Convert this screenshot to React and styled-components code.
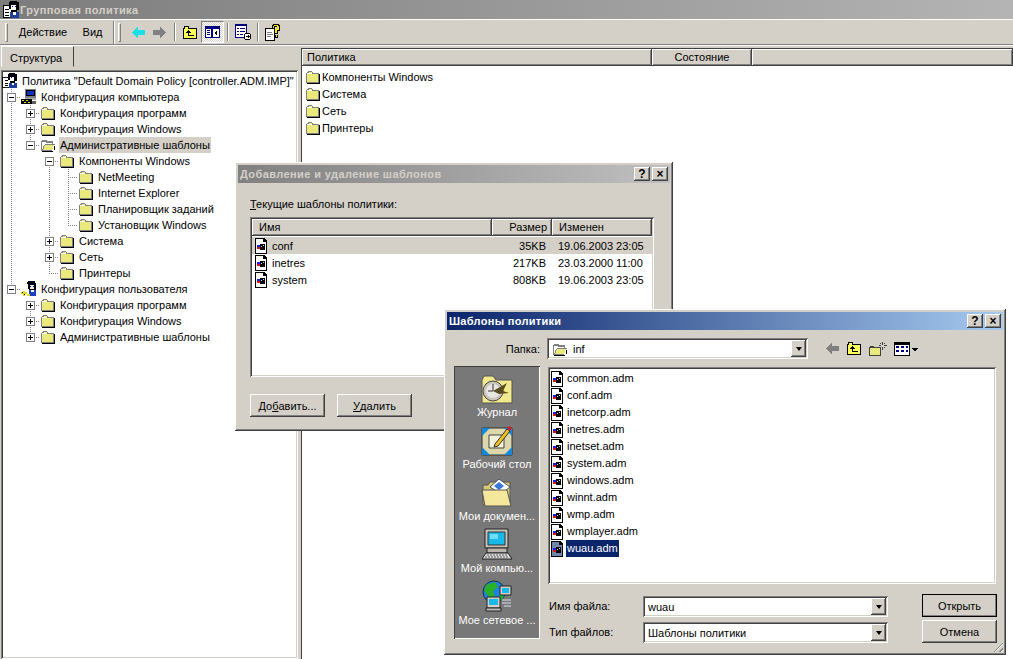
import styled, { createGlobalStyle, css } from 'styled-components';

const raised = css`
  box-shadow: inset -1px -1px #404040, inset 1px 1px #fff, inset -2px -2px #808080, inset 2px 2px #d4d0c8;
`;
const sunken = css`
  box-shadow: inset 1px 1px #808080, inset -1px -1px #fff, inset 2px 2px #404040, inset -2px -2px #d4d0c8;
`;

const GlobalStyle = createGlobalStyle`
  html, body { margin: 0; padding: 0; background: #d4d0c8; }
  body { font: 11px/16px "Liberation Sans", Arial, sans-serif; color: #000; }
  * { box-sizing: border-box; }
`;

/* ---------- icons ---------- */

function Folder() {
  return (
    <svg width="16" height="16" viewBox="0 0 16 16" shapeRendering="crispEdges">
      <path d="M1 4h1V3h1V2h4v1h1v1h6v10H1z" fill="#808080" />
      <path d="M2 5h1V4h1V3h3v2h6v8H2z" fill="#e9e97c" />
      <path d="M2 4h5v1H2z" fill="#fff" />
      <path d="M14 5h1v10H2v-1h12z" fill="#000" />
    </svg>
  );
}

function OpenFolder() {
  return (
    <svg width="16" height="16" viewBox="0 0 16 16" shapeRendering="crispEdges">
      <path d="M1 4h1V3h5v1h6v3h2v1h-1l-2 6H1z" fill="#808080" />
      <path d="M2 5h4v1h6v1H5v1H4v1H3v3H2z" fill="#fff" />
      <path d="M5 8h9l-2 5H3z" fill="#e9e97c" />
      <path d="M13 14H2v1h11zM14 9h1v4h-1z" fill="#000" />
    </svg>
  );
}

function AdmFile({ selected }) {
  return (
    <svg width="13" height="16" viewBox="0 0 13 16" shapeRendering="crispEdges">
      <path d="M0 0h9l3 3v13H0z" fill="#000" />
      <path d="M1 1h7v3h3v11H1z" fill={selected ? '#6f86ad' : '#fff'} />
      <path d="M2 7h3v2H2z" fill="#1a1aff" />
      <path d="M2 9h3v2H2z" fill="#e01010" />
      <path d="M5 6h5v6H5z" fill="#000" />
      <path d="M6 8h1v1H6zM8 7h1v1H8z" fill="#d8d8d0" />
    </svg>
  );
}

function PolicyIcon() {
  return (
    <svg width="18" height="18" viewBox="0 0 18 18" shapeRendering="crispEdges">
      <path d="M1 4.500h9v12H1z" fill="#fff" stroke="#000" />
      <path d="M3 8h4v1H3zM3 11h4v1H3zM3 14h4v1H3z" fill="#000" />
      <path d="M7 1h1V0h7v1h2v8h-2v2H9V8H7z" fill="#000" />
      <path d="M9 4h5v5H9z" fill="#fff" />
      <path d="M10 5h1v1h-1zM13 5h1v1h-1z" fill="#00f" />
      <path d="M8 11h9v6H8z" fill="#1f3f9f" />
      <path d="M11 11h3v3h-3z" fill="#fff" />
    </svg>
  );
}

function ComputerIcon() {
  return (
    <svg width="16" height="16" viewBox="0 0 16 16" shapeRendering="crispEdges">
      <path d="M4 0h11v11H4z" fill="#808080" />
      <path d="M5 1h9v6H5z" fill="#000" />
      <path d="M6 2h7v4H6z" fill="#1030c0" />
      <path d="M4 9h11v2H4z" fill="#b0b0a8" />
      <path d="M0 10h11v5H0z" fill="#000" />
      <path d="M1 11h2v1H1zM5 11h2v1H5zM3 13h2v1H3zM7 13h2v1H7z" fill="#e8d820" />
      <path d="M11 12h4v3h-4z" fill="#606060" />
    </svg>
  );
}

function UserIcon() {
  return (
    <svg width="16" height="16" viewBox="0 0 16 16" shapeRendering="crispEdges">
      <path d="M7 0h7v2h1v8h-2v1H8V8H7V3H6V1h1z" fill="#000" />
      <path d="M9 4h4v4H9z" fill="#f5e6d2" />
      <path d="M9 5h1v1H9zM12 5h1v1h-1z" fill="#00f" />
      <path d="M8 9h7v6H8z" fill="#1a3fc0" />
      <path d="M10 9h3v2h-3z" fill="#fff" />
      <path d="M0 11h2v-1h2v1h2v2H4v2H2v-2H0zM6 13h3v2H6z" fill="#e8d820" />
      <path d="M1 11h1v1H1zM3 13h1v1H3z" fill="#000" />
    </svg>
  );
}

function ArrowLeft({ color }) {
  return (
    <svg width="14" height="11" viewBox="0 0 14 11" shapeRendering="crispEdges">
      <path d="M6 0h1v3h7v5H7v3H6V10H5V9H4V8H3V7H2V6H1V5h1V4h1V3h1V2h1V1h1z" fill={color} />
    </svg>
  );
}

function ArrowRight() {
  return (
    <svg width="14" height="11" viewBox="0 0 14 11" shapeRendering="crispEdges">
      <path d="M8 0H7v3H0v5h7v3h1V10h1V9h1V8h1V7h1V6h1V5h-1V4h-1V3h-1V2H9V1H8z" fill="#808080" />
    </svg>
  );
}

function FolderUp() {
  return (
    <svg width="16" height="15" viewBox="0 0 16 15" shapeRendering="crispEdges">
      <path d="M1 3h1V1h5v2h8v11H1z" fill="#000" />
      <path d="M2 4h1V2h3v2h8v9H2z" fill="#ffff5a" />
      <path d="M6 5h1v1h1v1H7v3h5v1H6V7H5V6h1z" fill="#000" />
      <path d="M4 7h5v1H4z" fill="#000" />
    </svg>
  );
}

function PaneToggle() {
  return (
    <svg width="15" height="12" viewBox="0 0 15 12" shapeRendering="crispEdges">
      <path d="M0 0h15v12H0z" fill="#000080" />
      <path d="M1 3h5v8H1zM8 3h6v8H8z" fill="#fff" />
      <path d="M2 4h3v1H2zM2 6h3v1H2zM2 8h3v1H2z" fill="#000080" />
      <path d="M12 4v6L9 7z" fill="#000" />
    </svg>
  );
}

function ExportList() {
  return (
    <svg width="17" height="17" viewBox="0 0 17 17" shapeRendering="crispEdges">
      <path d="M0 0h12v14H0z" fill="#000080" />
      <path d="M1 2h10v11H1z" fill="#fff" />
      <path d="M2 4h2v1H2zM5 4h5v1H5zM2 7h2v1H2zM5 7h5v1H5zM2 10h2v1H2zM5 10h3v1H5z" fill="#000080" />
      <path d="M9 10h1V9h5v1h1v5h-1v1h-5v-1H9z" fill="#000" />
      <path d="M10 10h5v5h-5z" fill="#fff" />
      <path d="M11 12h2v-1l2 1.500-2 1.500v-1h-2z" fill="#000" />
    </svg>
  );
}

function HelpIcon() {
  return (
    <svg width="16" height="17" viewBox="0 0 16 17" shapeRendering="crispEdges">
      <path d="M0 4h10v13H0z" fill="#000" />
      <path d="M1 5h8v11H1z" fill="#fff" />
      <path d="M2 8h5v1H2zM2 10h6v1H2zM2 12h4v1H2z" fill="#808080" />
      <path d="M7 1h1V0h6v1h1v6h-2v3H9V6h3V3h-2v2H7z" fill="#000" />
      <path d="M8 2h1V1h4v1h1v4h-2v3h-2V5h2V2h-3v2H8z" fill="#ffe600" />
      <path d="M10 11h3v3h-3z" fill="#000" />
      <path d="M11 11h1v2h-1z" fill="#ffe600" />
    </svg>
  );
}

function NewFolder() {
  return (
    <svg width="18" height="14" viewBox="0 0 18 14" shapeRendering="crispEdges">
      <path d="M0 5h1V4h4v1h7v9H0z" fill="#404040" />
      <path d="M1 6h10v7H1z" fill="#e9e97c" />
      <path d="M13 0h1v3h-1zM13 5h1v3h-1zM15 3h3v1h-3zM10 3h2v1h-2zM15 1h1v1h-1zM11 1h1v1h-1zM15 5h1v1h-1z" fill="#404040" />
    </svg>
  );
}

function ViewMenu() {
  return (
    <svg width="24" height="14" viewBox="0 0 24 14" shapeRendering="crispEdges">
      <path d="M0 0h16v14H0z" fill="#000" />
      <path d="M1 3h14v10H1z" fill="#fff" />
      <path d="M2 4h3v2H2zM7 4h3v2H7zM12 4h2v2h-2zM2 8h3v2H2zM7 8h3v2H7zM12 8h2v2h-2z" fill="#000080" />
      <path d="M18 6h6v1h-1v1h-1v1h-2V8h-1V7h-1z" fill="#000" />
    </svg>
  );
}

function HistoryIcon() {
  return (
    <svg width="32" height="29" viewBox="0 0 32 29">
      <path d="M1 5l2-4h9l3 4h16v23H1z" fill="#f2e88c" stroke="#555" />
      <circle cx="12" cy="16" r="10" fill="#c8c4bc" stroke="#444" />
      <circle cx="12" cy="16" r="7" fill="#e8e6e0" />
      <path d="M12 16L26 8l-4 8 6 2-10 1z" fill="#5a4a20" />
      <path d="M12 9v7h-5" stroke="#333" fill="none" />
    </svg>
  );
}

function DesktopIcon() {
  return (
    <svg width="32" height="32" viewBox="0 0 32 32">
      <path d="M1 4h30v27H1z" fill="#dcd8ac" stroke="#333" />
      <path d="M1 4h8L1 12zM31 31h-8l8-8zM1 31v-8l8 8zM31 4v8l-8-8z" fill="#1488d8" />
      <path d="M8 11h15v13H8z" fill="#f5f2dc" stroke="#444" />
      <path d="M14 20L26 5l3 2-12 15-4 1z" fill="#f0c020" stroke="#333" />
      <path d="M26 5l2-3 3 2-2 3z" fill="#d02020" />
    </svg>
  );
}

function DocumentsIcon() {
  return (
    <svg width="32" height="30" viewBox="0 0 32 30">
      <path d="M2 7h5l2-3h20v23H2z" fill="#d8c878" stroke="#555" />
      <path d="M9 9L18 1l11 8-9 7z" fill="#fff" stroke="#456" />
      <path d="M18 4l5 4-5 4-5-4z" fill="#3a78d8" />
      <path d="M1 12h25l4 16H4z" fill="#f4e89c" stroke="#555" />
    </svg>
  );
}

function ComputerLarge() {
  return (
    <svg width="32" height="32" viewBox="0 0 32 32">
      <path d="M4 1h23v19H4z" fill="#c8c4bc" stroke="#222" />
      <path d="M7 4h17v13H7z" fill="#18b8e8" stroke="#333" />
      <path d="M9 6h8v5H9z" fill="#70dcf8" />
      <path d="M6 20h20v5H6z" fill="#b8b4ac" stroke="#222" />
      <path d="M1 31l4-6h22l4 6z" fill="#ddd" stroke="#222" />
      <path d="M6 27h20M4 29h24" stroke="#555" strokeDasharray="2 1" />
    </svg>
  );
}

function NetworkIcon() {
  return (
    <svg width="32" height="32" viewBox="0 0 32 32">
      <circle cx="13" cy="12" r="11" fill="#2080e0" stroke="#134" />
      <path d="M5 5l9-3 3 5-5 4 2 6-5 3-3-6-3-3zM19 14l4 2-3 5-2-3z" fill="#28b028" />
      <path d="M19 6h11v9H19z" fill="#d4d0c8" stroke="#222" />
      <path d="M21 8h7v5h-7z" fill="#18b8e8" />
      <path d="M6 17h13v11H6z" fill="#d4d0c8" stroke="#222" />
      <path d="M8 19h9v6H8z" fill="#18b8e8" />
      <path d="M5 28h15v3H5z" fill="#bbb" stroke="#222" />
      <path d="M21 20h9M21 23h9M23 26h7" stroke="#dde" />
    </svg>
  );
}

/* ---------- main window ---------- */

const Desktop = styled.div`
  position: relative;
  width: 1013px;
  height: 659px;
  overflow: hidden;
  background: #d4d0c8;
`;

const TitleBar = styled.div`
  height: 19px;
  display: flex;
  align-items: center;
  gap: 0;
  padding-left: 2px;
  background: linear-gradient(to right, #7c7c7c, #b4b4b4);
  color: #d4d0c8;
  font-weight: bold;
  letter-spacing: 0.4px;
`;

const Toolbar = styled.div`
  height: 26px;
  display: flex;
  align-items: center;
  padding: 0 0 0 5px;
  border-top: 1px solid #fff;
  border-bottom: 1px solid #808080;
  box-shadow: 0 1px #fff;
`;

const Grip = styled.span`
  width: 3px;
  height: 19px;
  margin-right: ${(p) => p.$after || 0}px;
  border: 1px solid;
  border-color: #fff #808080 #808080 #fff;
`;

const MenuItem = styled.span`
  width: ${(p) => p.$width}px;
  text-align: center;
`;

const BandEdge = styled.span`
  width: 2px;
  height: 23px;
  margin: 0 3px 0 3px;
  border-left: 1px solid #808080;
  border-right: 1px solid #fff;
`;

const ToolSep = styled.span`
  width: 2px;
  height: 18px;
  margin: 0 ${(p) => p.$gap || 3}px;
  border-left: 1px solid #808080;
  border-right: 1px solid #fff;
`;

const ToolButton = styled.span`
  width: ${(p) => p.$width || 22}px;
  height: 22px;
  display: flex;
  align-items: center;
  justify-content: center;
  ${(p) =>
    p.$pressed &&
    css`
      background: repeating-conic-gradient(#fff 0 25%, #d4d0c8 0 50%) 0 0 / 2px 2px;
      border: 1px solid;
      border-color: #808080 #fff #fff #808080;
    `}
`;

const Panes = styled.div`
  height: 614px;
  display: flex;
`;

const LeftPane = styled.div`
  width: 298px;
  padding: 1px 0 0 1px;
  display: flex;
  flex-direction: column;
`;

const Tab = styled.div`
  width: 73px;
  height: 21px;
  padding: 3px 0 0 8px;
  border: 1px solid;
  border-color: #fff #404040 transparent #fff;
`;

const Tree = styled.div`
  flex: 1;
  margin-top: 3px;
  padding: 3px 0 0 1px;
  background: #fff;
  ${sunken}
`;

const TreeRowWrap = styled.div`
  height: 16px;
  display: flex;
  align-items: center;
`;

const dots = 'repeating-linear-gradient(to bottom,#808080 0 1px,transparent 1px 2px)';
const dotsH = 'repeating-linear-gradient(to right,#808080 0 1px,transparent 1px 2px)';

const guideBackground = ({ $up, $down, $right }) => {
  const layers = [];
  if ($up && $down) layers.push(`${dots} 9px 0 / 1px 16px no-repeat`);
  else if ($up) layers.push(`${dots} 9px 0 / 1px 8px no-repeat`);
  else if ($down) layers.push(`${dots} 9px 8px / 1px 8px no-repeat`);
  if ($right) layers.push(`${dotsH} 9px 8px / 10px 1px no-repeat`);
  return layers.length ? layers.join(',') : 'none';
};

const Guide = styled.span`
  flex: 0 0 19px;
  height: 16px;
  display: flex;
  align-items: center;
  justify-content: center;
  padding-right: 1px;
  background: ${guideBackground};
`;

const Expander = styled.span`
  width: 9px;
  height: 9px;
  display: block;
  border: 1px solid #808080;
  background:
    ${(p) => (p.$open ? 'none' : 'linear-gradient(#000,#000) 3px 1px / 1px 5px no-repeat')},
    linear-gradient(#000, #000) 1px 3px / 5px 1px no-repeat,
    #fff;
`;

const NodeIcon = styled.span`
  flex: 0 0 16px;
  min-width: 0;
  height: 16px;
  display: flex;
  align-items: center;
`;

const NodeLabel = styled.span`
  margin-left: 3px;
  padding: 0 1px;
  white-space: nowrap;
  background: ${(p) => (p.$selected ? '#d4d0c8' : 'transparent')};
`;

const Splitter = styled.div`
  width: 3px;
`;

const RightPane = styled.div`
  flex: 1;
  margin-top: 3px;
  background: #fff;
  padding: 1px 0 0 1px;
  box-shadow: inset 1px 1px #404040;
`;

const ColumnHeaders = styled.div`
  display: flex;
  height: 17px;
  background: #d4d0c8;
`;

const ListHeaders = styled(ColumnHeaders)`
  margin-bottom: 1px;
`;

const ColumnHeader = styled.div`
  flex: ${(p) => (p.$width ? `0 0 ${p.$width}px` : '1')};
  padding: 1px ${(p) => p.$pad || 5}px;
  line-height: 14px;
  white-space: nowrap;
  text-align: ${(p) => p.$align || 'left'};
  box-shadow: inset -1px -1px #404040, inset 1px 1px #fff, inset -2px -2px #808080;
`;

const FolderList = styled.div`
  padding: 2px 0 0 3px;
`;

const FolderRow = styled.div`
  height: 17px;
  display: flex;
  align-items: center;
  gap: 1px;
`;

/* ---------- dialogs ---------- */

const Dialog = styled.div`
  position: absolute;
  left: ${(p) => p.$left}px;
  top: ${(p) => p.$top}px;
  width: ${(p) => p.$width}px;
  height: ${(p) => p.$height}px;
  padding: 3px;
  display: flex;
  flex-direction: column;
  background: #d4d0c8;
  ${raised}
`;

const DialogTitle = styled.div`
  flex: 0 0 18px;
  display: flex;
  align-items: center;
  justify-content: space-between;
  padding: 0 2px;
  font-weight: bold;
  color: ${(p) => (p.$active ? '#fff' : '#d4d0c8')};
  background: ${(p) =>
    p.$active
      ? 'linear-gradient(to right,#0a246a,#a6caf0)'
      : 'linear-gradient(to right,#808080,#c0c0c0)'};
`;

const TitleText = styled.span`
  letter-spacing: ${(p) => (p.$active ? 0.3 : 0.4)}px;
`;

const CaptionButtons = styled.div`
  display: flex;
  gap: 2px;
`;

const CaptionButton = styled.span`
  width: 16px;
  height: 14px;
  display: flex;
  align-items: center;
  justify-content: center;
  background: #d4d0c8;
  color: #000;
  font-size: 12px;
  font-weight: bold;
  line-height: 14px;
  ${raised}
`;

const TemplatesBody = styled.div`
  flex: 1;
  padding: 13px 16px 0 12px;
  display: flex;
  flex-direction: column;
`;

const FieldLabel = styled.div`
  height: 21px;
`;

const ListView = styled.div`
  height: 160px;
  padding: 2px;
  background: #fff;
  ${sunken}
`;

const ListRow = styled.div`
  height: 17px;
  display: flex;
  align-items: center;
  background: ${(p) => (p.$selected ? '#d4d0c8' : 'transparent')};
`;

const NameCell = styled.span`
  flex: 0 0 240px;
  display: flex;
  align-items: center;
  gap: 4px;
  padding-left: 3px;
`;

const SizeCell = styled.span`
  flex: 0 0 59px;
  text-align: right;
  padding-right: 5px;
`;

const DateCell = styled.span`
  padding-left: 7px;
  white-space: nowrap;
`;

const ButtonRow = styled.div`
  display: flex;
  gap: 12px;
  margin-top: 17px;
`;

const Button = styled.div`
  width: 75px;
  height: 23px;
  display: flex;
  align-items: center;
  justify-content: center;
  background: #d4d0c8;
  ${raised}
  ${(p) => p.$default && 'outline: 1px solid #000; outline-offset: -1px;'}
`;

const OpenBody = styled.div`
  flex: 1;
  padding: 8px 9px 0 7px;
  display: grid;
  grid-template-columns: 86px 448px;
  grid-template-rows: 21px 217px auto;
  column-gap: 8px;
  row-gap: 8px;
`;

const LookInLabel = styled.div`
  text-align: right;
  line-height: 22px;
`;

const LookInRow = styled.div`
  display: flex;
  align-items: center;
  margin-left: -1px;
`;

const Combo = styled.div`
  grid-column: ${(p) => p.$column || 'auto'};
  width: ${(p) => p.$width}px;
  height: 21px;
  display: flex;
  align-items: center;
  gap: 5px;
  padding: 0 2px 0 5px;
  background: #fff;
  white-space: nowrap;
  ${sunken}
`;

const ComboText = styled.span`
  flex: 1;
`;

const ComboArrow = styled.span`
  flex: 0 0 15px;
  height: 17px;
  display: flex;
  align-items: center;
  justify-content: center;
  background: #d4d0c8;
  ${raised}
  &::after {
    content: '';
    border: 3px solid transparent;
    border-top: 4px solid #000;
    border-bottom: 0;
  }
`;

const NavIcons = styled.div`
  display: flex;
  align-items: center;
  margin-left: 17px;
  gap: 7px;
`;

const Places = styled.div`
  grid-row: 2 / span 2;
  height: 273px;
  margin-top: -1px;
  padding-top: 7px;
  background: #787878;
  color: #fff;
  box-shadow: inset 1px 1px #404040, inset -1px -1px #fff;
`;

const Place = styled.div`
  height: 52px;
  display: flex;
  flex-direction: column;
  align-items: center;
  text-align: center;
`;

const PlaceIcon = styled.div`
  height: 31px;
  display: flex;
  align-items: flex-end;
  justify-content: center;
`;

const FileBox = styled.div`
  padding: 3px 0 0 3px;
  background: #fff;
  ${sunken}
`;

const FileRow = styled.div`
  height: 17px;
  display: flex;
  align-items: center;
  gap: 2px;
`;

const FileName = styled.span`
  padding: 0 1px;
  height: 17px;
  color: ${(p) => (p.$selected ? '#fff' : '#000')};
  background: ${(p) => (p.$selected ? '#0a246a' : 'transparent')};
`;

const OpenForm = styled.div`
  margin: 2px 0 0 1px;
  display: grid;
  grid-template-columns: 94px 245px 34px 75px;
  grid-template-rows: 23px 23px;
  row-gap: 3px;
  align-items: end;
`;

const FormLabel = styled.div`
  grid-column: 1;
  align-self: center;
`;

const ButtonCell = styled.div`
  grid-column: 4;
  grid-row: ${(p) => p.$row};
`;

const Resizer = styled.span`
  position: absolute;
  right: 3px;
  bottom: 3px;
  width: 12px;
  height: 12px;
  background: repeating-linear-gradient(135deg, transparent 0 2px, #808080 2px 3px, #fff 3px 4px);
  clip-path: polygon(100% 0, 100% 100%, 0 100%);
`;

/* ---------- data ---------- */

const tree = [
  { depth: [{ up: 1, down: 1, right: 1, box: 'open' }], icon: <ComputerIcon />, label: 'Конфигурация компьютера' },
  { depth: [{ up: 1, down: 1 }, { down: 1, up: 1, right: 1, box: 'closed' }], icon: <Folder />, label: 'Конфигурация программ' },
  { depth: [{ up: 1, down: 1 }, { down: 1, up: 1, right: 1, box: 'closed' }], icon: <Folder />, label: 'Конфигурация Windows' },
  { depth: [{ up: 1, down: 1 }, { up: 1, right: 1, box: 'open' }], icon: <OpenFolder />, label: 'Административные шаблоны', selected: true },
  { depth: [{ up: 1, down: 1 }, {}, { down: 1, right: 1, box: 'open' }], icon: <Folder />, label: 'Компоненты Windows' },
  { depth: [{ up: 1, down: 1 }, {}, { up: 1, down: 1 }, { up: 1, down: 1, right: 1 }], icon: <Folder />, label: 'NetMeeting' },
  { depth: [{ up: 1, down: 1 }, {}, { up: 1, down: 1 }, { up: 1, down: 1, right: 1 }], icon: <Folder />, label: 'Internet Explorer' },
  { depth: [{ up: 1, down: 1 }, {}, { up: 1, down: 1 }, { up: 1, down: 1, right: 1 }], icon: <Folder />, label: 'Планировщик заданий' },
  { depth: [{ up: 1, down: 1 }, {}, { up: 1, down: 1 }, { up: 1, right: 1 }], icon: <Folder />, label: 'Установщик Windows' },
  { depth: [{ up: 1, down: 1 }, {}, { up: 1, down: 1, right: 1, box: 'closed' }], icon: <Folder />, label: 'Система' },
  { depth: [{ up: 1, down: 1 }, {}, { up: 1, down: 1, right: 1, box: 'closed' }], icon: <Folder />, label: 'Сеть' },
  { depth: [{ up: 1, down: 1 }, {}, { up: 1, right: 1 }], icon: <Folder />, label: 'Принтеры' },
  { depth: [{ up: 1, right: 1, box: 'open' }], icon: <UserIcon />, label: 'Конфигурация пользователя' },
  { depth: [{}, { down: 1, right: 1, box: 'closed' }], icon: <Folder />, label: 'Конфигурация программ' },
  { depth: [{}, { up: 1, down: 1, right: 1, box: 'closed' }], icon: <Folder />, label: 'Конфигурация Windows' },
  { depth: [{}, { up: 1, right: 1, box: 'closed' }], icon: <Folder />, label: 'Административные шаблоны' },
];

const folders = ['Компоненты Windows', 'Система', 'Сеть', 'Принтеры'];

const templates = [
  { name: 'conf', size: '35KB', date: '19.06.2003 23:05', selected: true },
  { name: 'inetres', size: '217KB', date: '23.03.2000 11:00' },
  { name: 'system', size: '808KB', date: '19.06.2003 23:05' },
];

const files = [
  'common.adm', 'conf.adm', 'inetcorp.adm', 'inetres.adm', 'inetset.adm', 'system.adm',
  'windows.adm', 'winnt.adm', 'wmp.adm', 'wmplayer.adm', 'wuau.adm',
];

const places = [
  { icon: <HistoryIcon />, label: 'Журнал' },
  { icon: <DesktopIcon />, label: 'Рабочий стол' },
  { icon: <DocumentsIcon />, label: 'Мои докумен...' },
  { icon: <ComputerLarge />, label: 'Мой компью...' },
  { icon: <NetworkIcon />, label: 'Мое сетевое ...' },
];

function TreeRow({ node }) {
  return (
    <TreeRowWrap>
      {node.depth.map((g, i) => (
        <Guide key={i} $up={g.up} $down={g.down} $right={g.right}>
          {g.box && <Expander $open={g.box === 'open'} />}
        </Guide>
      ))}
      <NodeIcon>{node.icon}</NodeIcon>
      <NodeLabel $selected={node.selected}>{node.label}</NodeLabel>
    </TreeRowWrap>
  );
}

function Caption({ title, active }) {
  return (
    <DialogTitle $active={active}>
      <TitleText $active={active}>{title}</TitleText>
      <CaptionButtons>
        <CaptionButton>?</CaptionButton>
        <CaptionButton>×</CaptionButton>
      </CaptionButtons>
    </DialogTitle>
  );
}

export default function App() {
  return (
    <Desktop>
      <GlobalStyle />
      <TitleBar>
        <PolicyIcon />
        Групповая политика
      </TitleBar>
      <Toolbar>
        <Grip $after={3} />
        <MenuItem $width={64}>Действие</MenuItem>
        <MenuItem $width={35}>Вид</MenuItem>
        <BandEdge />
        <Grip $after={6} />
        <ToolButton><ArrowLeft color="#19dfe6" /></ToolButton>
        <ToolButton><ArrowRight /></ToolButton>
        <ToolSep />
        <ToolButton><FolderUp /></ToolButton>
        <ToolButton $pressed $width={23}><PaneToggle /></ToolButton>
        <ToolSep />
        <ToolButton><ExportList /></ToolButton>
        <ToolSep />
        <ToolButton><HelpIcon /></ToolButton>
      </Toolbar>
      <Panes>
        <LeftPane>
          <Tab>Структура</Tab>
          <Tree>
            <TreeRowWrap>
              <NodeIcon><PolicyIcon /></NodeIcon>
              <NodeLabel>Политика "Default Domain Policy [controller.ADM.IMP]"</NodeLabel>
            </TreeRowWrap>
            {tree.map((node, i) => (
              <TreeRow key={i} node={node} />
            ))}
          </Tree>
        </LeftPane>
        <Splitter />
        <RightPane>
          <ColumnHeaders>
            <ColumnHeader $width={350}>Политика</ColumnHeader>
            <ColumnHeader $width={100} $align="center">Состояние</ColumnHeader>
            <ColumnHeader />
          </ColumnHeaders>
          <FolderList>
            {folders.map((name) => (
              <FolderRow key={name}>
                <Folder />
                {name}
              </FolderRow>
            ))}
          </FolderList>
        </RightPane>
      </Panes>

      <Dialog $left={235} $top={162} $width={438} $height={269}>
        <Caption title="Добавление и удаление шаблонов" />
        <TemplatesBody>
          <FieldLabel><u>Т</u>екущие шаблоны политики:</FieldLabel>
          <ListView>
            <ListHeaders>
              <ColumnHeader $width={240} $pad={7}>Имя</ColumnHeader>
              <ColumnHeader $width={60} $align="right">Размер</ColumnHeader>
              <ColumnHeader $pad={7}>Изменен</ColumnHeader>
            </ListHeaders>
            {templates.map((t) => (
              <ListRow key={t.name} $selected={t.selected}>
                <NameCell><AdmFile />{t.name}</NameCell>
                <SizeCell>{t.size}</SizeCell>
                <DateCell>{t.date}</DateCell>
              </ListRow>
            ))}
          </ListView>
          <ButtonRow>
            <Button>До<u>б</u>авить...</Button>
            <Button><u>У</u>далить</Button>
          </ButtonRow>
        </TemplatesBody>
      </Dialog>

      <Dialog $left={444} $top={309} $width={562} $height={346}>
        <Caption title="Шаблоны политики" active />
        <OpenBody>
          <LookInLabel>Папка:</LookInLabel>
          <LookInRow>
            <Combo $width={261}>
              <OpenFolder />
              <ComboText>inf</ComboText>
              <ComboArrow />
            </Combo>
            <NavIcons>
              <ArrowLeft color="#808080" />
              <FolderUp />
              <NewFolder />
              <ViewMenu />
            </NavIcons>
          </LookInRow>
          <Places>
            {places.map((p) => (
              <Place key={p.label}>
                <PlaceIcon>{p.icon}</PlaceIcon>
                {p.label}
              </Place>
            ))}
          </Places>
          <FileBox>
            {files.map((f) => (
              <FileRow key={f}>
                <AdmFile selected={f === 'wuau.adm'} />
                <FileName $selected={f === 'wuau.adm'}>{f}</FileName>
              </FileRow>
            ))}
          </FileBox>
          <OpenForm>
            <FormLabel>Имя файла:</FormLabel>
            <Combo $width={245} $column={2}>
              <ComboText>wuau</ComboText>
              <ComboArrow />
            </Combo>
            <ButtonCell $row={1}><Button $default>Открыть</Button></ButtonCell>
            <FormLabel>Тип файлов:</FormLabel>
            <Combo $width={245} $column={2}>
              <ComboText>Шаблоны политики</ComboText>
              <ComboArrow />
            </Combo>
            <ButtonCell $row={2}><Button>Отмена</Button></ButtonCell>
          </OpenForm>
        </OpenBody>
        <Resizer />
      </Dialog>
    </Desktop>
  );
}
